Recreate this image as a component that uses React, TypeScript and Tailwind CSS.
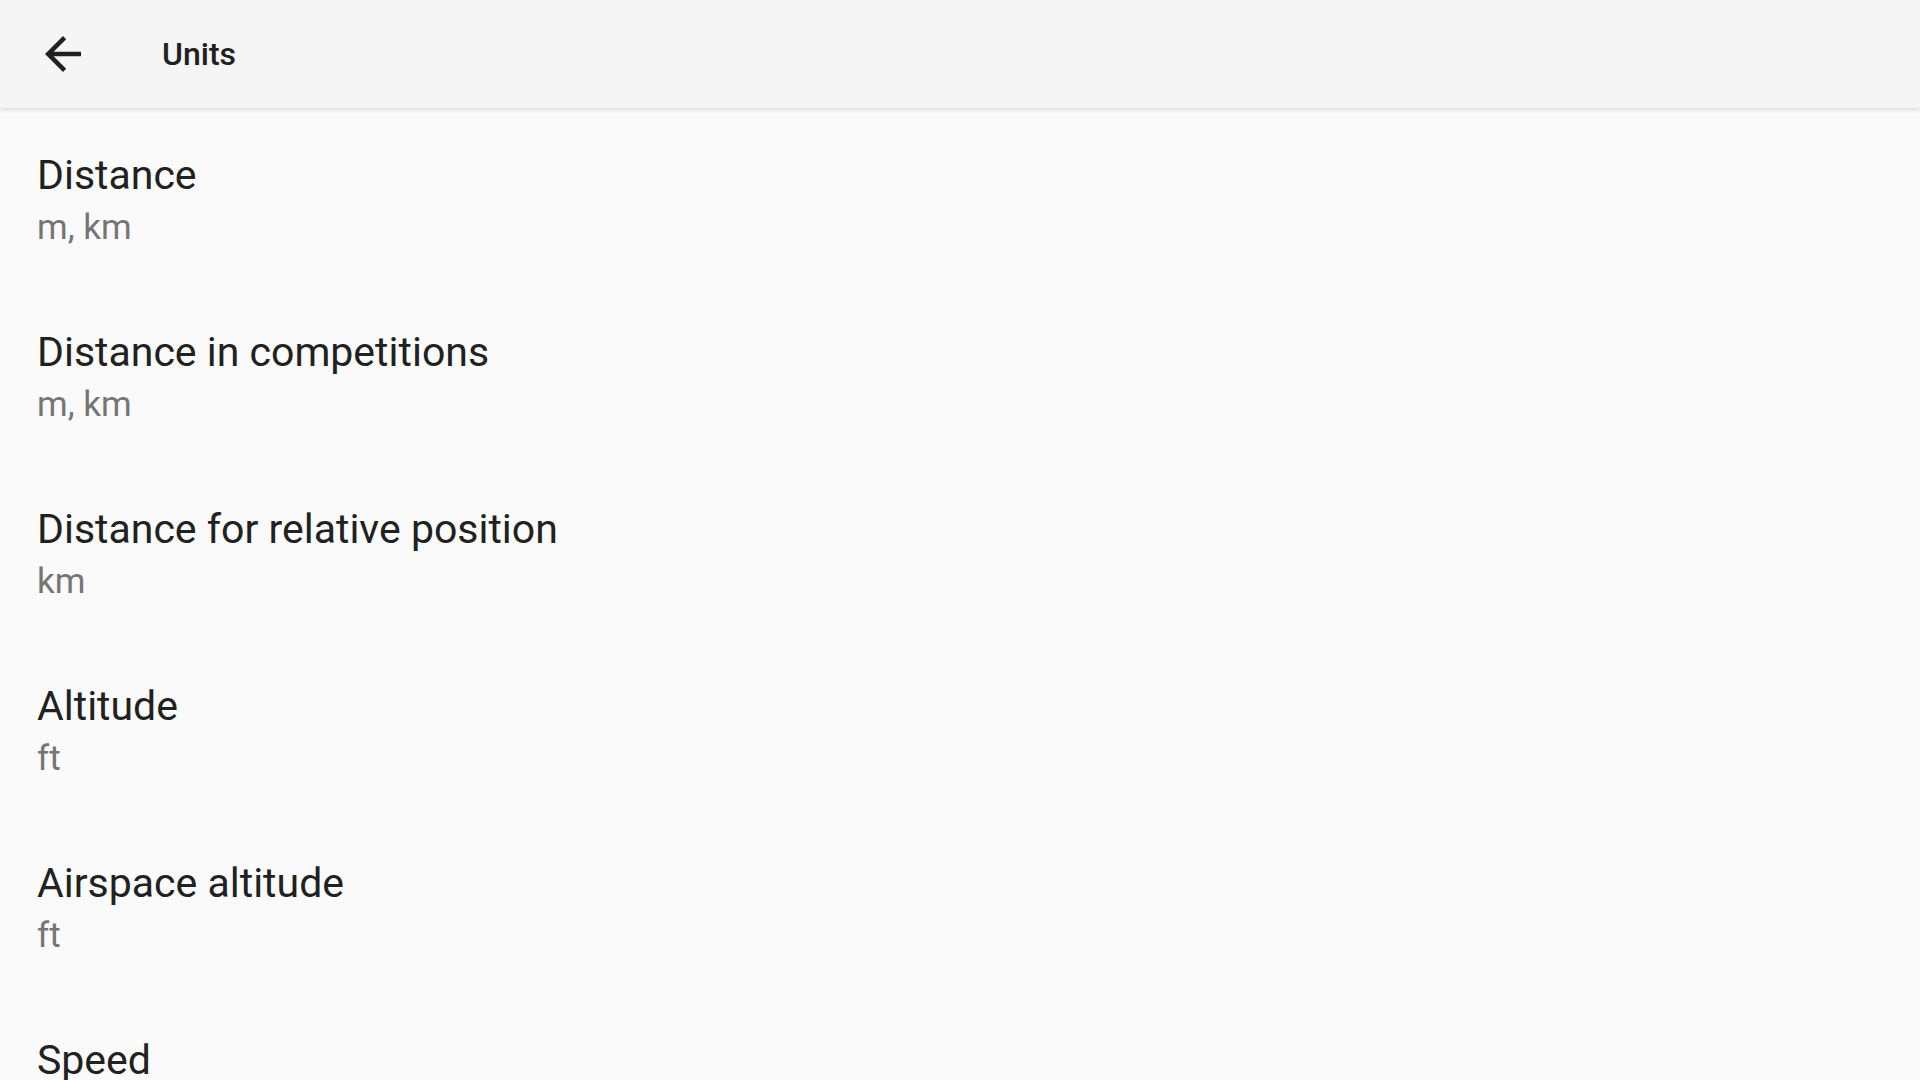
const items: { title: string; value: string }[] = [
  { title: "Distance", value: "m, km" },
  { title: "Distance in competitions", value: "m, km" },
  { title: "Distance for relative position", value: "km" },
  { title: "Altitude", value: "ft" },
  { title: "Airspace altitude", value: "ft" },
  { title: "Speed", value: "km/h" },
];

export default function App() {
  return (
    <div
      className="w-[1920px] h-[1080px] overflow-hidden bg-[#fafafa] flex flex-col"
      style={{ fontFamily: "Roboto, 'Liberation Sans', sans-serif" }}
    >
      {/* Toolbar */}
      <div className="relative z-10 h-[108px] shrink-0 bg-[#f5f5f5] flex items-center shadow-[0_2px_4px_rgba(0,0,0,0.12)]">
        <button className="w-[54px] h-[54px] ml-[36px] flex items-center justify-center text-[#212121]">
          <svg width="54" height="54" viewBox="0 0 24 24" fill="currentColor">
            <path d="M20 11H7.83l5.59-5.59L12 4l-8 8 8 8 1.41-1.41L7.83 13H20v-2z" />
          </svg>
        </button>
        <span className="ml-[72px] text-[32px] font-medium text-[#212121] leading-none">
          Units
        </span>
      </div>

      {/* Preference list */}
      <div className="flex flex-col pt-[4px]">
        {items.map((item) => (
          <div key={item.title} className="px-[37px] py-[37px] flex flex-col">
            <span className="text-[41px] leading-[52px] text-[#212121]">
              {item.title}
            </span>
            <span className="mt-[3px] text-[35px] leading-[48px] text-[#757575]">
              {item.value}
            </span>
          </div>
        ))}
      </div>
    </div>
  );
}
